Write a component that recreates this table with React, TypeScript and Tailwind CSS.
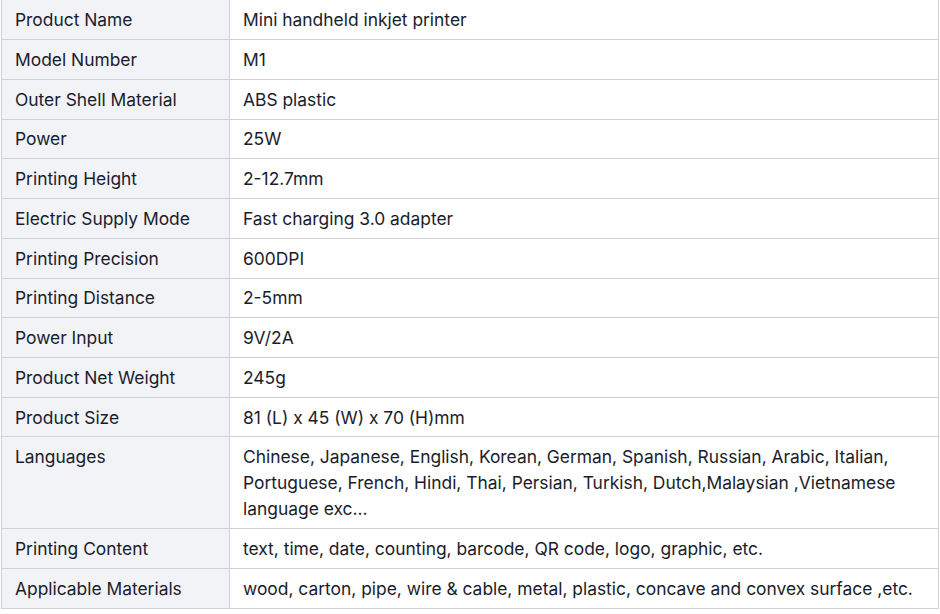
const specs: [string, string][] = [
    ['Product Name', 'Mini handheld inkjet printer'],
    ['Model Number', 'M1'],
    ['Outer Shell Material', 'ABS plastic'],
    ['Power', '25W'],
    ['Printing Height', '2-12.7mm'],
    ['Electric Supply Mode', 'Fast charging 3.0 adapter'],
    ['Printing Precision', '600DPI'],
    ['Printing Distance', '2-5mm'],
    ['Power Input', '9V/2A'],
    ['Product Net Weight', '245g'],
    ['Product Size', '81 (L) x 45 (W) x 70 (H)mm'],
    [
        'Languages',
        'Chinese, Japanese, English, Korean, German, Spanish, Russian, Arabic, Italian, Portuguese, French, Hindi, Thai, Persian, Turkish, Dutch,Malaysian ,Vietnamese language exc...',
    ],
    ['Printing Content', 'text, time, date, counting, barcode, QR code, logo, graphic, etc.'],
    ['Applicable Materials', 'wood, carton, pipe, wire & cable, metal, plastic, concave and convex surface ,etc.'],
];

export default function App() {
    return (
        <div className="min-h-screen bg-white pl-px font-['Inter','Liberation_Sans',sans-serif] text-[17.4px] leading-[26px] text-[#1a1d2b]">
            <table className="w-[938px] border-collapse table-fixed -mt-[0.6px]">
                <colgroup>
                    <col className="w-[228px]" />
                    <col />
                </colgroup>
                <tbody>
                    {specs.map(([label, value]) => (
                        <tr key={label}>
                            <td className="border border-[#cfd1d4] bg-[#f2f3f7] px-[13px] pt-[6.8px] pb-[5.95px] align-top">
                                {label}
                            </td>
                            <td className="border border-[#cfd1d4] bg-white px-[13px] pt-[6.8px] pb-[5.95px] align-top">
                                {value}
                            </td>
                        </tr>
                    ))}
                </tbody>
            </table>
        </div>
    );
}
